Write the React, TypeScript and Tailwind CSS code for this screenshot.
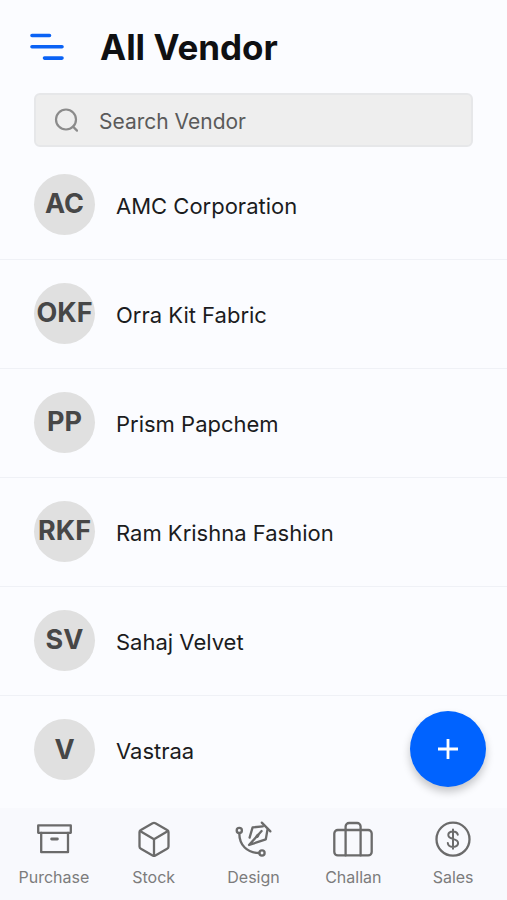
import React, { ReactNode } from 'react';

interface Vendor {
  initials: string;
  name: string;
}

interface NavItem {
  label: string;
  icon: ReactNode;
}

const vendors: Vendor[] = [
  { initials: 'AC', name: 'AMC Corporation' },
  { initials: 'OKF', name: 'Orra Kit Fabric' },
  { initials: 'PP', name: 'Prism Papchem' },
  { initials: 'RKF', name: 'Ram Krishna Fashion' },
  { initials: 'SV', name: 'Sahaj Velvet' },
  { initials: 'V', name: 'Vastraa' },
];

const NavIcon: React.FC<{ children: ReactNode }> = ({ children }) => (
  <svg
    className="size-10"
    viewBox="0 0 40 40"
    fill="none"
    stroke="currentColor"
    strokeWidth="2.3"
    strokeLinecap="round"
    strokeLinejoin="round"
    aria-hidden="true"
  >
    {children}
  </svg>
);

const navItems: NavItem[] = [
  {
    label: 'Purchase',
    icon: (
      <NavIcon>
        <path d="M4.2 6.4h32.6v7.4H4.2z" />
        <path d="M7.2 13.8v19.4h26.8V13.8" />
        <path d="M17.6 20h5.8" strokeWidth="2.8" />
      </NavIcon>
    ),
  },
  {
    label: 'Stock',
    icon: (
      <NavIcon>
        <path d="M18.6 4.2 6.9 10.9a2.6 2.6 0 0 0-1.4 2.3v14.2a2.6 2.6 0 0 0 1.4 2.3l11.7 6.7a3 3 0 0 0 2.8 0l11.7-6.7a2.6 2.6 0 0 0 1.4-2.3V13.2a2.6 2.6 0 0 0-1.4-2.3L21.4 4.2a3 3 0 0 0-2.8 0z" />
        <path d="M6 12 20 20.2l14-8.2M20 20.2v16" />
      </NavIcon>
    ),
  },
  {
    label: 'Design',
    icon: (
      <NavIcon>
        <circle cx="6.3" cy="11.4" r="2.6" />
        <circle cx="29" cy="34" r="2.6" />
        <path d="M6.3 14.2C6.3 26 14 34 26.3 34" />
        <path d="m16.6 18.6 3-10.2 10.2-1M34.4 11l-1.6 9.4L16 26l12.6-14" />
        <path d="m28.8 3.6 8.6 8.8" />
        <path d="m24 17.4.8-1" strokeWidth="3.2" />
      </NavIcon>
    ),
  },
  {
    label: 'Challan',
    icon: (
      <NavIcon>
        <rect x="1.3" y="11" width="37.4" height="25.4" rx="3.5" />
        <path d="M12.6 36.4V7.5a3.5 3.5 0 0 1 3.5-3.5h8a3.5 3.5 0 0 1 3.5 3.5v28.9" />
      </NavIcon>
    ),
  },
  {
    label: 'Sales',
    icon: (
      <NavIcon>
        <circle cx="20" cy="20.2" r="16.5" />
        <path
          d="M24.8 15.8c-.4-2.1-2.2-3.4-4.8-3.4-2.8 0-4.7 1.4-4.7 3.6 0 2.4 2 3.2 4.7 3.9 3 .8 5.1 1.6 5.1 4.2 0 2.4-2.1 3.8-5.1 3.8-3 0-5-1.4-5.2-3.9M20 10.4v19.4"
          strokeWidth="2"
        />
      </NavIcon>
    ),
  },
];

const Header: React.FC = () => (
  <header className="flex h-[93px] items-center gap-9 px-[30px]">
    <button type="button" aria-label="Open menu" className="text-[#0a62f5]">
      <svg
        className="h-7 w-[34px]"
        viewBox="0 0 34 28"
        fill="none"
        stroke="currentColor"
        strokeWidth="3.6"
        strokeLinecap="round"
      >
        <path d="M2 2.5h17.5M2 13.8h30M14.5 25.1H32" />
      </svg>
    </button>
    <h1 className="text-[35px] leading-10 font-bold text-[#0f1012]">All Vendor</h1>
  </header>
);

const SearchBox: React.FC = () => (
  <div className="mx-[34px] flex h-[54px] items-center gap-[21px] rounded-md border-2 border-[#e6e7e9] bg-[#eeeeee] px-[18px]">
    <svg
      className="size-6 shrink-0 text-[#8b8b8b]"
      viewBox="0 0 24 24"
      fill="none"
      stroke="currentColor"
      strokeWidth="2.2"
      strokeLinecap="round"
      aria-hidden="true"
    >
      <circle cx="12" cy="11.5" r="10" />
      <path d="m19 18.6 4 4" />
    </svg>
    <input
      type="search"
      aria-label="Search Vendor"
      placeholder="Search Vendor"
      className="h-full min-w-0 flex-1 bg-transparent pt-0.5 text-[21px] text-[#4f4f4f] outline-none placeholder:text-[#5a5a5a]"
    />
  </div>
);

const VendorRow: React.FC<{ vendor: Vendor }> = ({ vendor }) => (
  <li className="flex h-[109px] items-center gap-[21px] border-b border-[#eff1f6] px-[34px] pb-0.5 last:border-b-0">
    <span className="flex size-[61px] shrink-0 items-center justify-center rounded-full bg-[#e0e0e0] text-[27px] leading-8 font-bold text-[#474747]">
      {vendor.initials}
    </span>
    <span className="pt-[3px] text-[22px] leading-7 text-[#1b1c1e]">{vendor.name}</span>
  </li>
);

const BottomNav: React.FC = () => (
  <nav className="sticky bottom-0 mt-auto grid h-[92px] grid-cols-5 bg-[#f8f9fd] px-1 pt-[11px]">
    {navItems.map((item) => (
      <a key={item.label} href="#" className="flex flex-col items-center gap-1.5 text-[#6b6b6b]">
        {item.icon}
        <span className="text-base leading-6 text-[#7c7c7c]">{item.label}</span>
      </a>
    ))}
  </nav>
);

const App: React.FC = () => {
  return (
    <div className="flex min-h-screen flex-col bg-[#fbfcff] font-['Inter',sans-serif]">
      <Header />
      <main>
        <SearchBox />
        <ul className="pt-1">
          {vendors.map((vendor) => (
            <VendorRow key={vendor.name} vendor={vendor} />
          ))}
        </ul>
      </main>
      <BottomNav />
      <button
        type="button"
        aria-label="Add vendor"
        className="fixed right-[21px] bottom-[113px] flex size-[76px] items-center justify-center rounded-full bg-[#0063ff] text-white shadow-[0_5px_8px_rgba(0,0,0,0.22)]"
      >
        <svg className="size-5" viewBox="0 0 20 20" fill="none" stroke="currentColor" strokeWidth="2.8">
          <path d="M10 0v20M0 10h20" />
        </svg>
      </button>
    </div>
  );
};

export default App;
